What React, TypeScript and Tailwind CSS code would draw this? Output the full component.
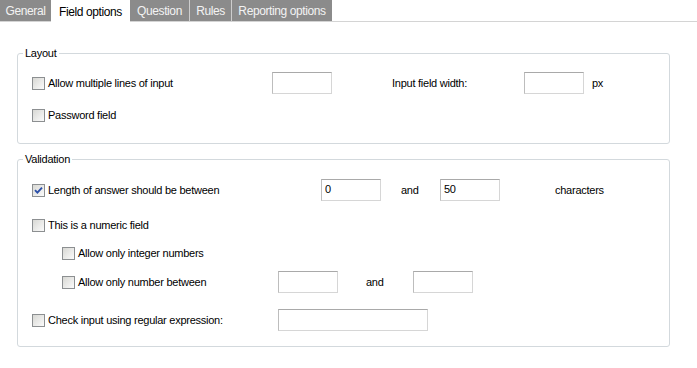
import React from 'react';

const tabs = [
  { label: 'General', w: 'w-[51px]', sep: false },
  { label: 'Field options', w: 'w-[79px]', sep: false, active: true },
  { label: 'Question', w: 'w-[60px]', sep: true },
  { label: 'Rules', w: 'w-[42px]', sep: true },
  { label: 'Reporting options', w: 'w-[100px]', sep: false },
];

function Checkbox({ checked = false }: { checked?: boolean }) {
  return (
    <span className="relative flex h-[13px] w-[13px] shrink-0 items-center justify-center border border-[#8c8f91] bg-gradient-to-br from-[#d8d8d4] to-[#fbfbfb]">
      {checked && (
        <svg width="9" height="9" viewBox="0 0 9 9">
          <path d="M1 4.2 L3.4 6.6 L8 1.6" fill="none" stroke="#2b4fa8" strokeWidth="1.9" />
        </svg>
      )}
    </span>
  );
}

function Field({ w = 'w-[60px]', value = '' }: { w?: string; value?: string }) {
  return (
    <input
      readOnly
      defaultValue={value}
      className={`${w} h-[22px] shrink-0 border border-[#d6d6d6] border-t-[#a9a9a9] border-l-[#bdbdbd] bg-white pl-[3px] pb-[3px] text-[11px] text-black outline-none`}
    />
  );
}

function Label({ text, checked, w }: { text: string; checked?: boolean; w: string }) {
  return (
    <div className={`flex ${w} shrink-0 items-center gap-[3px]`}>
      <Checkbox checked={checked} />
      <span className="whitespace-nowrap">{text}</span>
    </div>
  );
}

export default function App() {
  return (
    <div className="h-[368px] w-[697px] overflow-hidden bg-white font-['Liberation_Sans',Arial,sans-serif] text-[11px] tracking-[-0.25px] text-black">
      <div className="flex h-[22px]">
        {tabs.map((t) =>
          t.active ? (
            <div key={t.label} className={`${t.w} flex h-[22px] items-center justify-center bg-white pt-px text-[12px] tracking-[-0.4px] text-black`}>
              {t.label}
            </div>
          ) : (
            <div
              key={t.label}
              className={`${t.w} flex h-[22px] items-center justify-center border-b border-b-[#d4d4d4] bg-[#8b8b8b] text-[12px] tracking-[-0.4px] text-[#f3f3f3] ${t.sep ? 'border-r border-r-[#cdcdcd]' : ''}`}
            >
              {t.label}
            </div>
          )
        )}
        <div className="h-[22px] flex-1 border-b border-b-[#d4d4d4]" />
      </div>

      <div className="pl-[17px] pr-[27px] pt-[25px]">
        <fieldset className="m-0 rounded-[3px] border border-[#d3d9dd] p-0">
          <legend className="ml-[5px] px-[2px] leading-[13px]">Layout</legend>
          <div className="flex flex-col pb-[17px] pl-[14px] pt-[12px]">
            <div className="flex h-[22px] items-center">
              <Label text="Allow multiple lines of input" w="w-[240px]" />
              <Field />
              <span className="ml-[60px] w-[132px] whitespace-nowrap">Input field width:</span>
              <Field />
              <span className="ml-[8px]">px</span>
            </div>
            <div className="mt-[10px] flex h-[22px] items-center">
              <Label text="Password field" w="w-[240px]" />
            </div>
          </div>
        </fieldset>

        <fieldset className="m-0 mt-[9px] rounded-[3px] border border-[#d3d9dd] p-0">
          <legend className="ml-[5px] px-[2px] leading-[13px]">Validation</legend>
          <div className="flex flex-col pb-[15px] pl-[14px] pt-[13px]">
            <div className="flex h-[22px] items-center">
              <Label text="Length of answer should be between" checked w="w-[289px]" />
              <Field value="0" />
              <span className="ml-[20px] w-[39px]">and</span>
              <Field value="50" />
              <span className="ml-[55px]">characters</span>
            </div>
            <div className="mt-[13px] flex h-[22px] items-center">
              <Label text="This is a numeric field" w="w-[240px]" />
            </div>
            <div className="mt-[6px] flex h-[22px] items-center pl-[30px]">
              <Label text="Allow only integer numbers" w="w-[216px]" />
            </div>
            <div className="mt-[7px] flex h-[22px] items-center pl-[30px]">
              <Label text="Allow only number between" w="w-[216px]" />
              <Field />
              <span className="ml-[28px] w-[47px]">and</span>
              <Field />
            </div>
            <div className="mt-[16px] flex h-[22px] items-center">
              <Label text="Check input using regular expression:" w="w-[246px]" />
              <Field w="w-[150px]" />
            </div>
          </div>
        </fieldset>
      </div>
    </div>
  );
}
